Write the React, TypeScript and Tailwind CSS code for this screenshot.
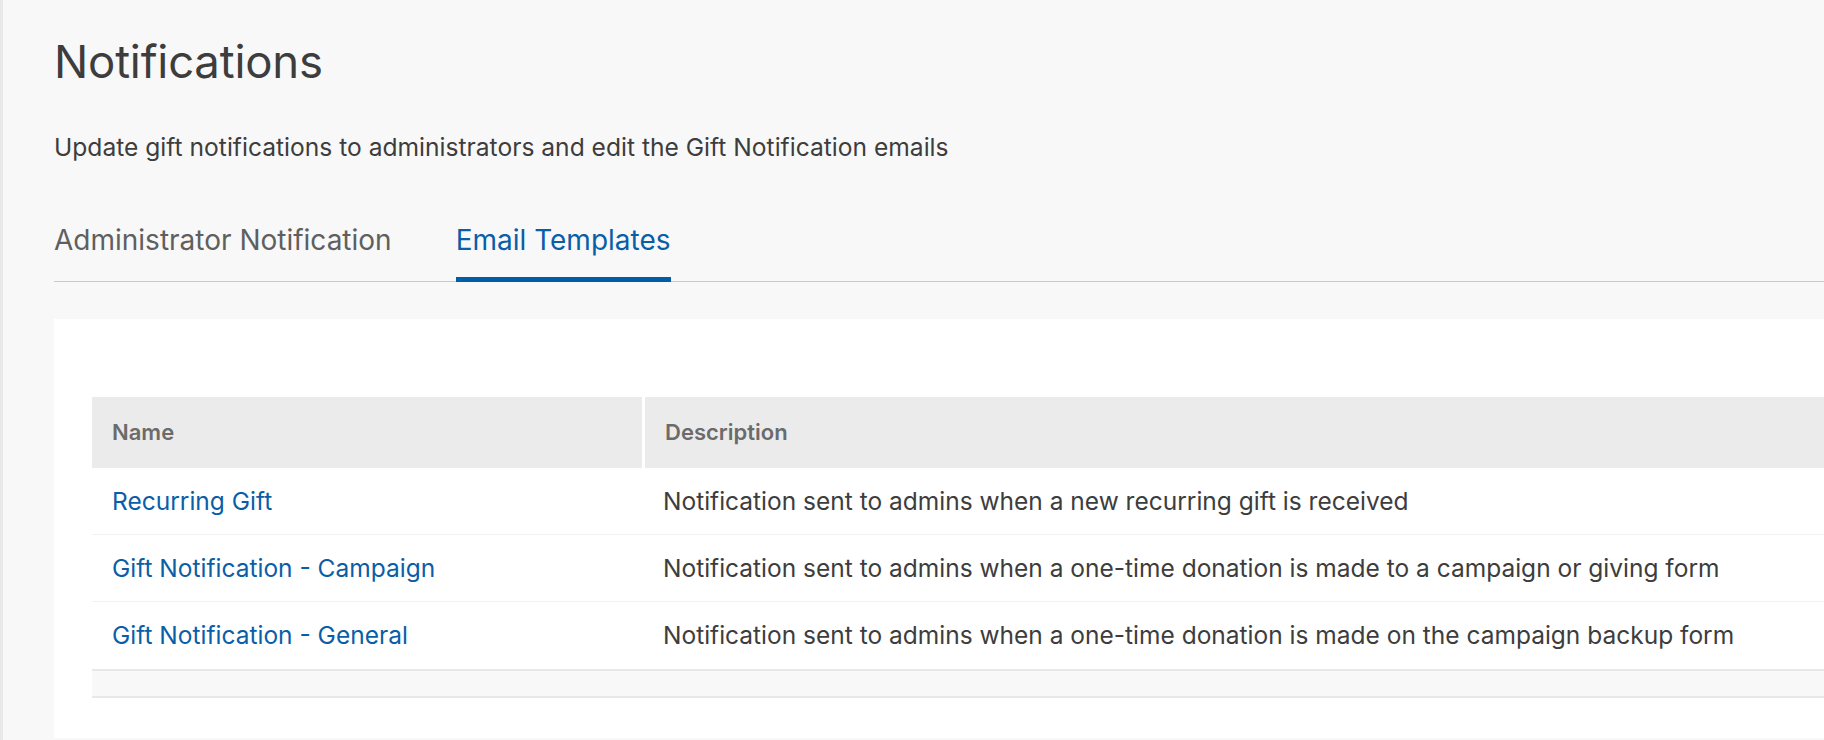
import React from 'react';

const templates = [
  {
    name: 'Recurring Gift',
    description: 'Notification sent to admins when a new recurring gift is received',
  },
  {
    name: 'Gift Notification - Campaign',
    description:
      'Notification sent to admins when a one-time donation is made to a campaign or giving form',
  },
  {
    name: 'Gift Notification - General',
    description:
      'Notification sent to admins when a one-time donation is made on the campaign backup form',
  },
];

export default function App() {
  return (
    <div className="flex min-h-screen w-full overflow-hidden bg-[#f8f8f8] font-['Inter',sans-serif] text-[#3d3d3d]">
      {/* sidebar edge */}
      <div className="w-[3px] shrink-0 bg-[#e9e9e9]" />

      <main className="w-[1900px] shrink-0 pl-[51px] pt-[34px] pb-[3px]">
        <h1 className="text-[45.5px] leading-[55px] font-normal tracking-[-0.2px] text-[#3d3d3d]">
          Notifications
        </h1>
        <p className="mt-[43px] text-[24.6px] leading-[30px]">
          Update gift notifications to administrators and edit the Gift Notification emails
        </p>

        {/* Tabs */}
        <div className="mt-[61px] flex gap-[64px] border-b border-[#c9c9c9]">
          <button className="-mb-px border-b-[5px] border-transparent pb-[20px] text-[28px] leading-[34px] text-[#5f5f5f]">
            Administrator Notification
          </button>
          <button className="-mb-px border-b-[5px] border-[#005ea6] pb-[20px] text-[28px] leading-[34px] text-[#0a5ea8]">
            Email Templates
          </button>
        </div>

        {/* Card */}
        <section className="mt-[37px] bg-white pl-[38px] pt-[78px] pb-[40px]">
          <div className="w-full">
            <div className="grid h-[71px] grid-cols-[553px_1fr] bg-[#ebebeb] text-[22px] font-semibold text-[#6b6b6b]">
              <div className="flex items-center border-r-[3px] border-white pl-[20px]">Name</div>
              <div className="flex items-center pl-[20px]">Description</div>
            </div>

            {templates.map((t, i) => (
              <div
                key={t.name}
                className={
                  'grid h-[67px] grid-cols-[553px_1fr] text-[24.5px] ' +
                  (i < templates.length - 1 ? 'border-b border-[#f1f1f1]' : '')
                }
              >
                <div className="flex items-center pl-[20px]">
                  <a href="#" className="text-[#0a5ea8]">
                    {t.name}
                  </a>
                </div>
                <div className="flex items-center pl-[18px]">{t.description}</div>
              </div>
            ))}

            {/* empty footer */}
            <div className="h-[29px] border-y-2 border-[#e8e8e8] bg-[#f8f8f8]" />
          </div>
        </section>
      </main>
    </div>
  );
}
